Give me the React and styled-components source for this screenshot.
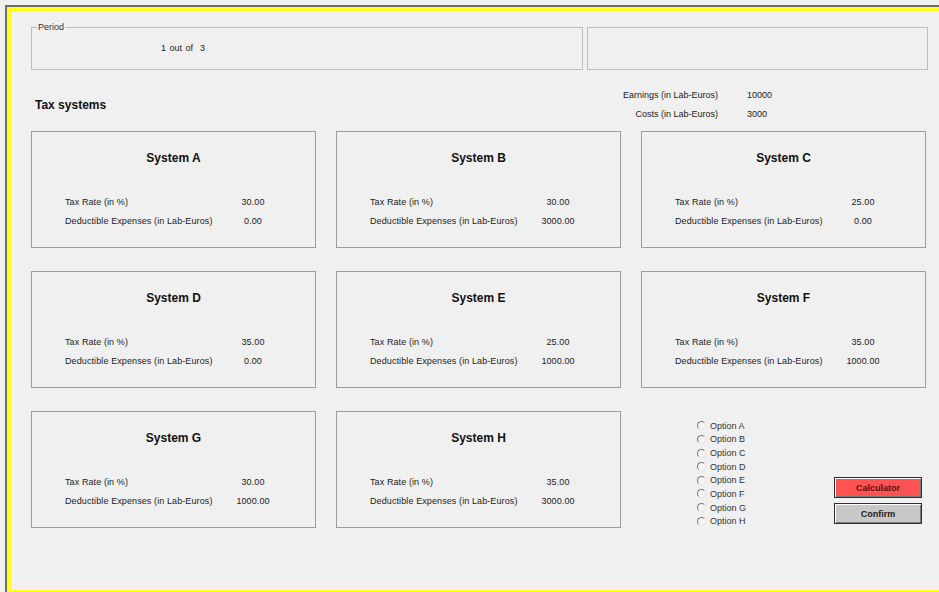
import React from "react";
import styled, { createGlobalStyle } from "styled-components";

const GlobalStyle = createGlobalStyle`
  html, body {
    margin: 0;
    padding: 0;
    background: #f0f0f0;
    overflow: hidden;
  }
  body {
    font-family: "Liberation Sans", Arial, sans-serif;
    color: #222;
  }
`;

const SYSTEMS = [
  { name: "A", rate: "30.00", expenses: "0.00" },
  { name: "B", rate: "30.00", expenses: "3000.00" },
  { name: "C", rate: "25.00", expenses: "0.00" },
  { name: "D", rate: "35.00", expenses: "0.00" },
  { name: "E", rate: "25.00", expenses: "1000.00" },
  { name: "F", rate: "35.00", expenses: "1000.00" },
  { name: "G", rate: "30.00", expenses: "1000.00" },
  { name: "H", rate: "35.00", expenses: "3000.00" },
];

const OPTIONS = ["A", "B", "C", "D", "E", "F", "G", "H"];

const Frame = styled.div`
  margin: 5px 0 0 5px;
  border-top: 2px solid #6e6e6e;
  border-left: 2px solid #6e6e6e;
`;

const Screen = styled.div`
  box-sizing: border-box;
  height: 587px;
  border: 4px solid #ffff1a;
  border-right: none;
  background: #f0f0f0;
  padding: 16px 0 0 20px;
`;

const TopRow = styled.div`
  display: flex;
  gap: 4px;
`;

const Box = styled.div`
  position: relative;
  box-sizing: border-box;
  width: ${({ width }) => width}px;
  height: 43px;
  border: 1px solid #bdbdbd;
`;

const Legend = styled.span`
  position: absolute;
  top: -6px;
  left: 5px;
  padding: 0 1px;
  background: #f0f0f0;
  font-size: 9px;
  line-height: 10px;
  color: #333;
`;

const PeriodText = styled.div`
  padding: 15px 0 0 129px;
  font-size: 9px;
  color: #222;
  word-spacing: 1px;
`;

const InfoRow = styled.div`
  display: flex;
  align-items: center;
  padding-top: 16px;
  margin-bottom: 7px;
`;

const SectionTitle = styled.div`
  width: 586px;
  padding-left: 4px;
  font-size: 12px;
  font-weight: bold;
  color: #111;
`;

const Totals = styled.div`
  display: grid;
  grid-template-columns: 97px auto;
  column-gap: 29px;
  font-size: 9px;
  line-height: 19px;
  color: #222;
`;

const TotalLabel = styled.span`
  text-align: right;
`;

const Grid = styled.div`
  display: grid;
  grid-template-columns: repeat(3, 285px);
  grid-auto-rows: 117px;
  column-gap: 20px;
  row-gap: 23px;
`;

const Card = styled.div`
  box-sizing: border-box;
  border: 1px solid #9c9c9c;
  padding: 19px 0 0 33px;
`;

const CardTitle = styled.div`
  margin-left: -33px;
  text-align: center;
  font-size: 12px;
  line-height: 14px;
  font-weight: bold;
  color: #111;
  margin-bottom: 28px;
`;

const Row = styled.div`
  display: grid;
  grid-template-columns: 158px 60px;
  font-size: 9px;
  line-height: 19px;
  letter-spacing: 0.1px;
  color: #222;
`;

const Value = styled.span`
  text-align: center;
`;

const ControlCell = styled.div`
  display: flex;
  padding-left: 56px;
`;

const RadioList = styled.div`
  display: flex;
  flex-direction: column;
  padding-top: 8px;
`;

const RadioItem = styled.label`
  display: flex;
  align-items: center;
  gap: 4px;
  height: 14px;
  font-size: 9px;
  color: #333;
`;

const RadioDot = styled.span`
  box-sizing: border-box;
  width: 9px;
  height: 9px;
  border-radius: 50%;
  border: 1px solid;
  border-color: #7a7a7a #e6e6e6 #e6e6e6 #7a7a7a;
  background: #f4f4f4;
`;

const Buttons = styled.div`
  display: flex;
  flex-direction: column;
  gap: 5px;
  margin: 66px 0 0 auto;
  margin-right: 4px;
`;

const Button = styled.button`
  width: 88px;
  height: 21px;
  padding: 0;
  border: 1px solid #2e2e2e;
  box-shadow: inset 1px 1px 0 #fff, inset -1px -1px 0 #7a7a7a;
  background: ${({ tone }) => (tone === "red" ? "#ff5353" : "#c8c8c8")};
  color: ${({ tone }) => (tone === "red" ? "#5a0a0a" : "#1c1c1c")};
  font-family: "Liberation Sans", Arial, sans-serif;
  font-size: 9px;
  font-weight: bold;
`;

const SystemCard = ({ name, rate, expenses }) => (
  <Card>
    <CardTitle>System {name}</CardTitle>
    <Row>
      <span>Tax Rate (in %)</span>
      <Value>{rate}</Value>
    </Row>
    <Row>
      <span>Deductible Expenses (in Lab-Euros)</span>
      <Value>{expenses}</Value>
    </Row>
  </Card>
);

export default function App() {
  return (
    <>
      <GlobalStyle />
      <Frame>
        <Screen>
          <TopRow>
            <Box width={552}>
              <Legend>Period</Legend>
              <PeriodText>1 out of &nbsp;3</PeriodText>
            </Box>
            <Box width={341} />
          </TopRow>

          <InfoRow>
            <SectionTitle>Tax systems</SectionTitle>
            <Totals>
              <TotalLabel>Earnings (in Lab-Euros)</TotalLabel>
              <span>10000</span>
              <TotalLabel>Costs (in Lab-Euros)</TotalLabel>
              <span>3000</span>
            </Totals>
          </InfoRow>

          <Grid>
            {SYSTEMS.map((s) => (
              <SystemCard key={s.name} {...s} />
            ))}
            <ControlCell>
              <RadioList>
                {OPTIONS.map((o) => (
                  <RadioItem key={o}>
                    <RadioDot />
                    Option {o}
                  </RadioItem>
                ))}
              </RadioList>
              <Buttons>
                <Button tone="red">Calculator</Button>
                <Button>Confirm</Button>
              </Buttons>
            </ControlCell>
          </Grid>
        </Screen>
      </Frame>
    </>
  );
}
